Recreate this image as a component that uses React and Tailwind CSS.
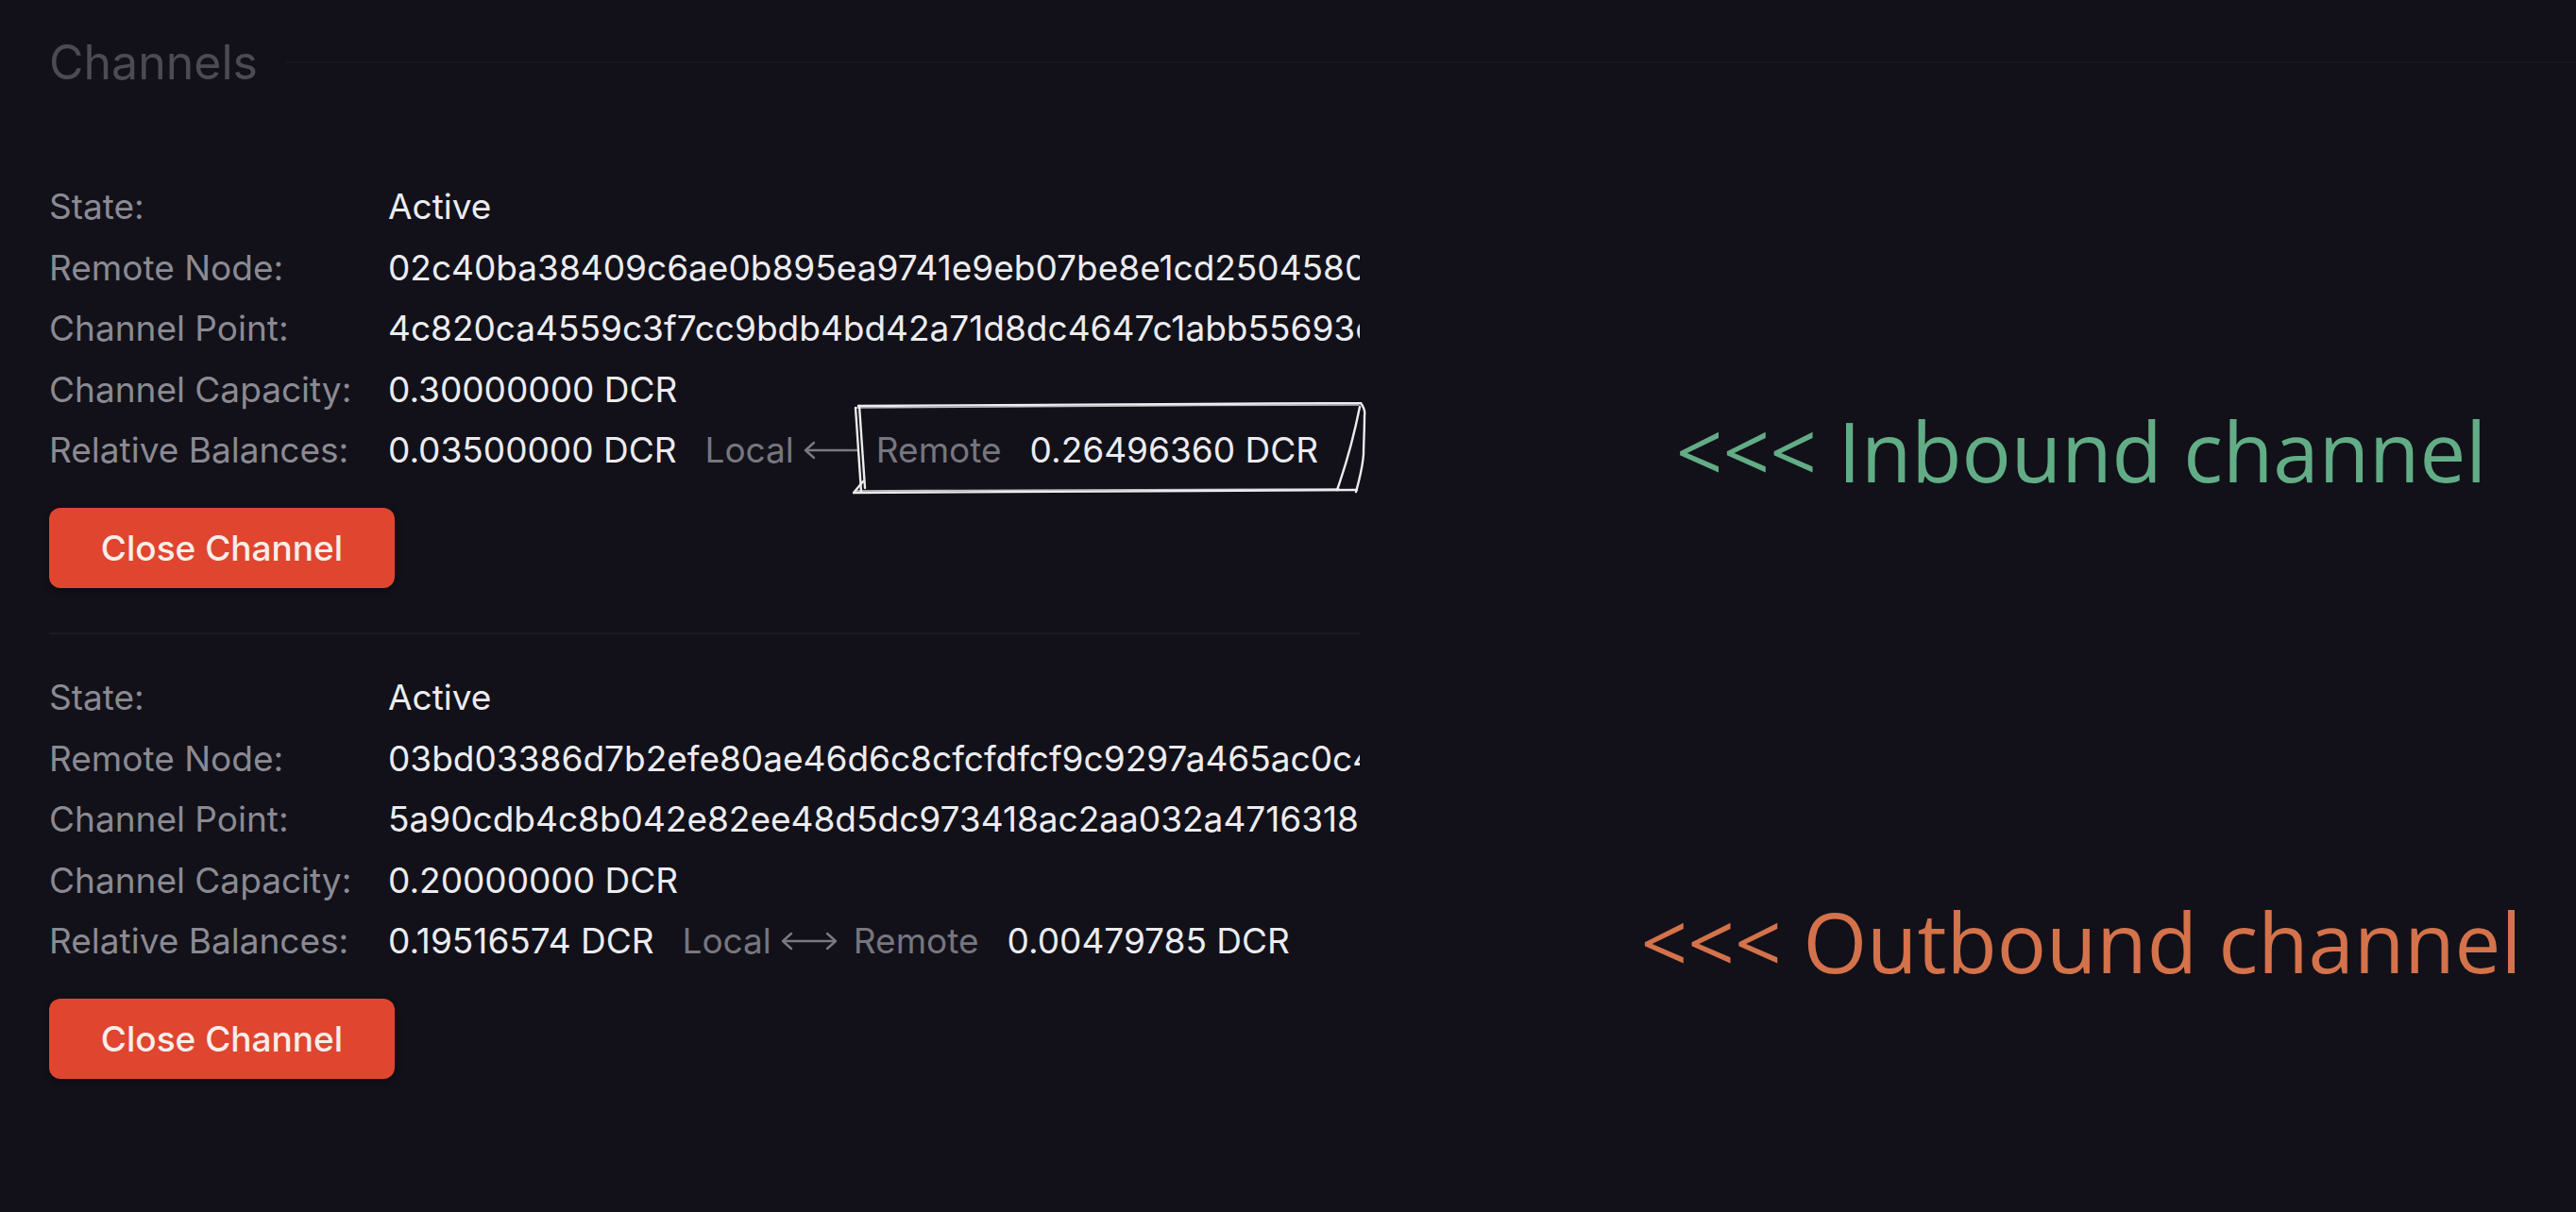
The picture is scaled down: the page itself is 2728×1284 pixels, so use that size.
import React from "react";

function ArrowLeft() {
  return (
    <svg width="60" height="22" viewBox="0 0 60 22" className="shrink-0">
      <path d="M2 11 H58" stroke="#7a7982" strokeWidth="2.4" fill="none" />
      <path d="M11 3 L2 11 L11 19" stroke="#7a7982" strokeWidth="2.4" fill="none" strokeLinecap="round" strokeLinejoin="round" />
    </svg>
  );
}

function ArrowBoth() {
  return (
    <svg width="60" height="22" viewBox="0 0 60 22" className="shrink-0">
      <path d="M2 11 H58" stroke="#7a7982" strokeWidth="2.4" fill="none" />
      <path d="M11 3 L2 11 L11 19" stroke="#7a7982" strokeWidth="2.4" fill="none" strokeLinecap="round" strokeLinejoin="round" />
      <path d="M49 3 L58 11 L49 19" stroke="#7a7982" strokeWidth="2.4" fill="none" strokeLinecap="round" strokeLinejoin="round" />
    </svg>
  );
}

function SketchBox() {
  return (
    <svg
      width="548"
      height="100"
      viewBox="0 0 548 100"
      className="absolute left-[851px] top-[-19px] pointer-events-none"
      fill="none"
      stroke="#ececee"
      strokeWidth="2.4"
      strokeLinecap="round"
      strokeLinejoin="round"
    >
      <path d="M6 4 C150 3, 350 2, 538 1" />
      <path d="M3 6 C160 5, 360 3, 536 3" strokeWidth="1.6" opacity="0.8" />
      <path d="M3 6 L9 95" />
      <path d="M7 4 L13 91" />
      <path d="M1 96 L11 84" />
      <path d="M1 96 C180 95, 360 94, 534 93" />
      <path d="M4 94 C180 93, 360 92, 515 92" strokeWidth="1.6" opacity="0.8" />
      <path d="M538 1 C541 5, 543 9, 542 14 C542 30, 541 45, 541 55 C540 70, 536 84, 533 95" />
      <path d="M537 5 C532 30, 524 62, 513 93" />
    </svg>
  );
}

function Row({ label, children, annotation, extra }) {
  return (
    <div className="relative flex items-center h-[64.5px]">
      <div className="flex items-center w-[1388px] h-full shrink-0 overflow-hidden whitespace-nowrap leading-[64.5px]">
        <div className="w-[359px] shrink-0 text-[#8b8a93]">{label}</div>
        <div className="flex items-center text-[#ececf0]">{children}</div>
      </div>
      {extra}
      {annotation}
    </div>
  );
}

function Channel({ remoteNode, channelPoint, capacity, local, remote, inbound, annotation }) {
  return (
    <div>
      <Row label="State:">Active</Row>
      <Row label="Remote Node:">{remoteNode}</Row>
      <Row label="Channel Point:">{channelPoint}</Row>
      <Row label="Channel Capacity:">{capacity}</Row>
      <Row
        label="Relative Balances:"
        extra={inbound ? <SketchBox /> : null}
        annotation={annotation}
      >
        <span>{local}</span>
        <span className="ml-[30px] text-[#77767f]">Local</span>
        <span className="ml-[10px] flex items-center">{inbound ? <ArrowLeft /> : <ArrowBoth />}</span>
        <span className="ml-[17px] text-[#77767f]">Remote</span>
        <span className="ml-[30px]">{remote}</span>
      </Row>
      <button className="mt-[28.5px] w-[366px] h-[85px] rounded-[12px] bg-[#e0452f] text-[37px] leading-none font-medium text-[#f7eeea] shadow-[0_2px_6px_rgba(0,0,0,0.5)]">
        Close Channel
      </button>
    </div>
  );
}

export default function App() {
  return (
    <div className="min-h-screen w-full bg-[#121119] pl-[52px] pt-[36px] font-['Inter','Liberation_Sans',sans-serif] text-[37px] leading-none overflow-hidden">
      <div className="flex items-center h-[60px] gap-[30px]">
        <h2 className="text-[50px] leading-[60px] text-[#4c4b55] font-normal">Channels</h2>
        <div className="flex-1 h-[2px] bg-[#18171f]" />
      </div>

      <div className="mt-[91px]">
        <Channel
          remoteNode="02c40ba38409c6ae0b895ea9741e9eb07be8e1cd2504580f3c6b8d2a9e1f47c3a5"
          channelPoint="4c820ca4559c3f7cc9bdb4bd42a71d8dc4647c1abb55693e0f7a2b1c9d:0"
          capacity="0.30000000 DCR"
          local="0.03500000 DCR"
          remote="0.26496360 DCR"
          inbound
          annotation={
            <div className="flex-1 pl-[240px] text-center font-['Open_Sans','Noto_Sans',sans-serif] text-[87px] leading-[1.2] text-[#62ad86] whitespace-nowrap">
              &lt;&lt;&lt; Inbound channel
            </div>
          }
        />
      </div>

      <div className="w-[1388px] h-[2px] bg-[#1a1922] mt-[47px] mb-[35px]" />

      <Channel
        remoteNode="03bd03386d7b2efe80ae46d6c8cfcfdfcf9c9297a465ac0c4e1b7a8f2d63c95b10"
        channelPoint="5a90cdb4c8b042e82ee48d5dc973418ac2aa032a4716318b2e5f0c7d9a:1"
        capacity="0.20000000 DCR"
        local="0.19516574 DCR"
        remote="0.00479785 DCR"
        annotation={
          <div className="flex-1 pl-[240px] text-center font-['Open_Sans','Noto_Sans',sans-serif] text-[87px] leading-[1.2] text-[#d4724b] whitespace-nowrap">
            &lt;&lt;&lt; Outbound channel
          </div>
        }
      />
    </div>
  );
}
